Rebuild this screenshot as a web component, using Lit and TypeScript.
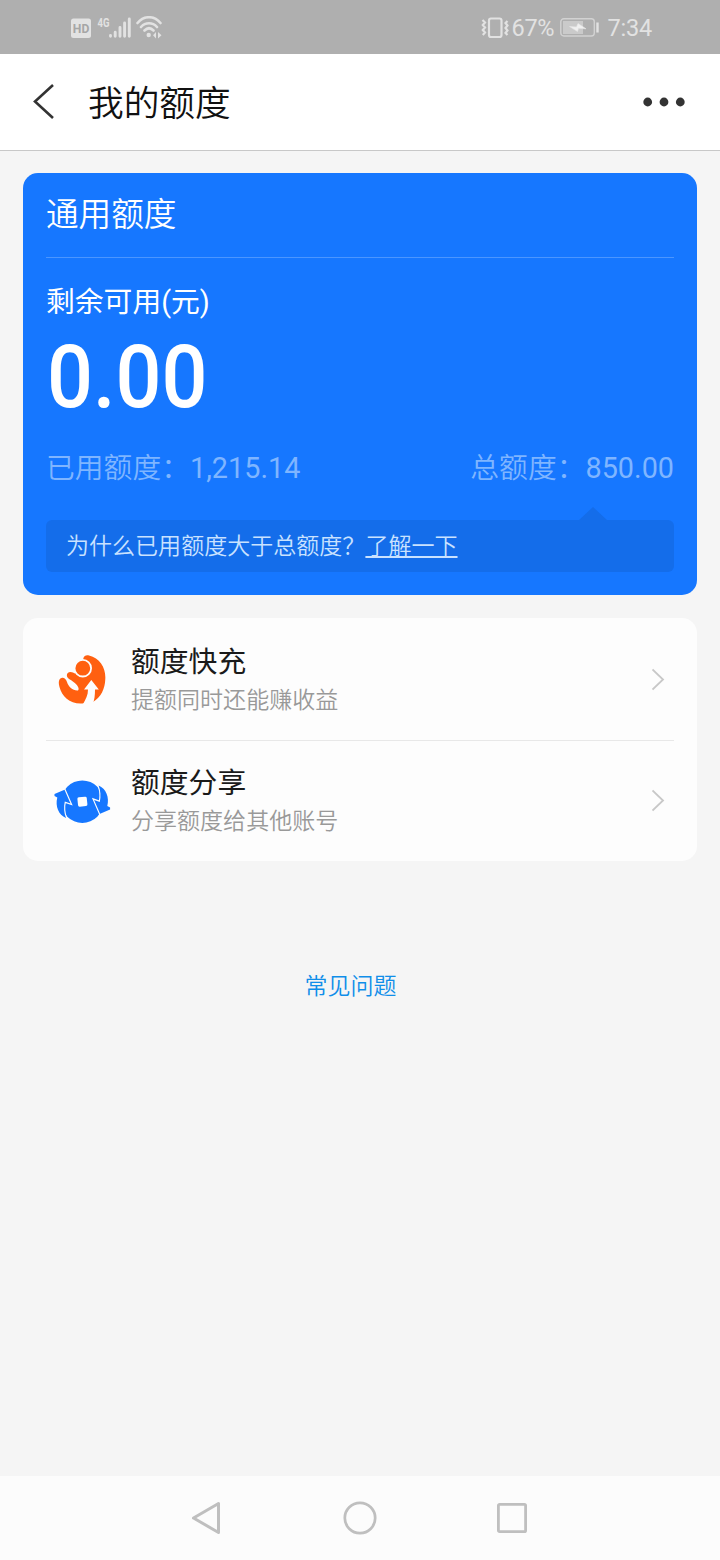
import { LitElement, html, css, svg } from "lit";
import { customElement, property } from "lit/decorators.js";

const boostIcon = svg`
  <path fill="#ff6010" d="M26.300 3.500C27 .500 29.500 -.300 32 .400C43 3 49 13 48.300 24C48 34 44 42 36 47L27 48.300C14 50 5 42 2.500 32C1 27 2 23.500 4.500 23C7 22.300 9 24 10 27C11.500 32 16 36 21 35.500C23 33 20 28.500 12 24C8.500 21.500 9.500 17 13.500 17C15.500 17 16.500 18 18 18.500L26.500 6Z"/>
  <circle cx="25.800" cy="13.200" r="8.300" fill="#ff6010" stroke="#fdfdfd" stroke-width="1.800"/>
  <path fill="#fdfdfd" d="M34.300 25L27 34.500H31C31 40 29 44 25.500 50H35.500C37.500 45 38 40 38 34.500H41.800Z"/>`;

const shareArrow = "M1.500 14L11.500 9.700L17.500 23.500L11.800 21.500C10.500 27 11 33 13 38C5.500 35 2 26 4.300 17.500L1.500 16Z";
const shareIcon = svg`
  <g fill="#1677ff" stroke="#fdfdfd" stroke-width="2.400" paint-order="stroke">
    <circle cx="29.300" cy="21.700" r="21.200" stroke="none"/>
    <path d=${shareArrow}/>
    <path d=${shareArrow} transform="rotate(180 29.300 21.700)"/>
  </g>
  <rect x="24.700" y="17" width="9.400" height="9.400" rx="1.600" fill="#fdfdfd" transform="rotate(-6 29.300 21.700)"/>`;

@customElement("status-bar")
class StatusBar extends LitElement {
  static styles = css`
    :host { display: flex; height: 54px; box-sizing: border-box; padding: 1px 68px 0 71px; align-items: center;
      justify-content: space-between; background: #afafaf; color: #e2e2e2; font: 23.500px/54px Roboto, sans-serif; }
    .side { display: flex; align-items: center; height: 53px; }
    svg { display: block; flex: none; }
    .pct { width: 42px; margin: 0 7px 0 2px; letter-spacing: -.3px; }
    .time { margin-left: 8px; letter-spacing: -.2px; }
    .tag { font: 700 12px Roboto, sans-serif; }
    .hd { font: 700 13px Roboto, sans-serif; }
  `;
  render() {
    return html`
      <div class="side">
        <svg width="94" height="24" viewBox="0 0 94 24">
          <rect x="0" y="2.500" width="20" height="19.500" rx="2.500" fill="#e2e2e2"/>
          <text class="hd" x="1.800" y="17" textLength="16.500" lengthAdjust="spacingAndGlyphs" fill="#a6a6a6">HD</text>
          <text class="tag" x="26.500" y="10.600" textLength="12" lengthAdjust="spacingAndGlyphs" fill="#e2e2e2">4G</text>
          <path d="M39.500 20.200V19.500M44.200 20.200V16.200M49 20.200V11.500M53.600 20.200V7M58.300 20.200V3" stroke="#e2e2e2" stroke-width="2.900" stroke-linecap="round"/>
          <g fill="none" stroke="#e2e2e2" stroke-width="2.600" stroke-linecap="round">
            <path d="M66.500 7C73-.700 83-.700 89.500 7M70 11C74.500 6 81.500 6 86 11M73.500 14.500C76.500 11.500 79.500 11.500 82.500 14.500"/>
          </g>
          <circle cx="77.700" cy="19" r="2.200" fill="#e2e2e2"/>
          <path d="M82 19.200L85 16V22.500ZM90.500 19.200L87 16V22.500Z" fill="#e2e2e2"/>
        </svg>
      </div>
      <div class="side">
        <svg width="28" height="22" viewBox="0 0 28 22" fill="none" stroke="#e2e2e2">
          <rect x="8" y="1.500" width="12.500" height="18.500" rx="2" stroke-width="2.200"/>
          <path stroke-width="2.200" d="M1.500 3L4 5.500L1.800 8L4 10.500L1.800 13L4 15.500L1.800 18M26.500 4L24.500 6L26.500 8.500L24.500 11L26.500 13.500L24.500 16L26.500 18"/>
        </svg>
        <span class="pct">67%</span>
        <svg width="39" height="19" viewBox="0 0 39 19">
          <rect x=".8" y=".8" width="33.500" height="17.200" rx="3" fill="none" stroke="#d2d2d2" stroke-width="1.400"/>
          <rect x="3" y="3" width="20" height="13" fill="#cacaca"/>
          <path d="M9.500 8.500L16.500 9L18 5.500L26 10.800L18.500 10.300L17.500 13.500Z" fill="#f0f0f0" stroke="#e6e6e6" stroke-width=".6"/>
          <path d="M37.500 4.500V14.500" stroke="#e2e2e2" stroke-width="2.400"/>
        </svg>
        <span class="time">7:34</span>
      </div>`;
  }
}

@customElement("quota-card")
class QuotaCard extends LitElement {
  static styles = css`
    :host { display: block; box-sizing: border-box; height: 422px; padding: 0 23px; border-radius: 15px; background: #1677ff;
      color: #fff; font-family: Roboto, "Noto Sans CJK SC", sans-serif; font-weight: 350; }
    .heading { height: 84px; line-height: 85px; font-size: 32.640px; border-bottom: 1px solid #4b96ff; }
    .label { margin-top: 23px; font-size: 28.800px; line-height: 42px; font-weight: 400; }
    .amount { height: 88px; margin-left: 1px; font: 500 88px/108px Roboto, sans-serif; transform: scaleX(.92); transform-origin: 0 0; }
    .totals { display: flex; justify-content: space-between; margin-top: 32px; font-size: 28.800px; line-height: 50px; color: #7fb5ff; }
    .totals span { white-space: nowrap; }
    .totals b { font-weight: 400; }
    .tip { position: relative; height: 52px; box-sizing: border-box; margin-top: 27px; padding-left: 20px; border-radius: 6px;
      background: #146dea; color: #c9e2ff; font-size: 23.040px; line-height: 54px; }
    .tip::before { content: ""; position: absolute; right: 67px; top: -13px; border: solid transparent; border-width: 0 14px 13px;
      border-bottom-color: #146dea; }
    .more { color: #c9e2ff; text-decoration: underline; text-underline-offset: 2px; text-decoration-thickness: 1.500px; }
  `;
  render() {
    return html`
      <div class="heading">通用额度</div>
      <div class="label">剩余可用(元)</div>
      <div class="amount">0.00</div>
      <div class="totals"><span>已用额度：<b>1,215.14</b></span><span>总额度：<b>850.00</b></span></div>
      <div class="tip">为什么已用额度大于总额度？<a class="more">了解一下</a></div>`;
  }
}

@customElement("quota-row")
class QuotaRow extends LitElement {
  @property() name = "";
  @property() detail = "";
  @property() kind = "boost";
  static styles = css`
    :host { display: flex; align-items: center; height: 121px; font-family: "Noto Sans CJK SC", sans-serif; }
    :host([kind="share"]) { height: 119px; }
    svg { display: block; flex: none; }
    .icon { width: 58px; margin: 1px 20px 0 7px; display: flex; justify-content: center; }
    .text { flex: 1; padding-bottom: 5px; }
    .name { font-size: 28.800px; line-height: 42px; color: #1a1a1a; }
    .detail { font-size: 23.040px; line-height: 35px; color: #999; font-weight: 350; }
    .arrow { margin-right: 9px; }
  `;
  render() {
    const boost = this.kind === "boost";
    return html`
      <div class="icon">${boost
        ? html`<svg width="50" height="50" viewBox="0 0 50 50">${boostIcon}</svg>`
        : html`<svg width="58" height="43" viewBox="0 0 58 43">${shareIcon}</svg>`}</div>
      <div class="text"><div class="name">${this.name}</div><div class="detail">${this.detail}</div></div>
      <svg class="arrow" width="13" height="24" viewBox="0 0 13 24"><path d="M.500 1.500L11 11.500L.500 21.500" fill="none" stroke="#c8c8c8" stroke-width="1.800"/></svg>`;
  }
}

@customElement("app-root")
class AppRoot extends LitElement {
  static styles = css`
    :host { display: flex; flex-direction: column; height: 1560px; background: #f5f5f5; font-family: "Noto Sans CJK SC", sans-serif; }
    svg { display: block; flex: none; }
    header { display: flex; align-items: center; height: 97px; box-sizing: border-box; padding: 0 34px 0 32px; background: #fff; border-bottom: 1px solid #c8c8c8; }
    h1 { flex: 1; margin: 0 0 0 33px; padding-bottom: 3px; font-size: 35.700px; font-weight: 350; line-height: 93px; color: #111; }
    main { flex: 1; padding: 22px 23px 0; }
    .list { height: 243px; box-sizing: border-box; margin-top: 23px; padding: 1px 23px 0; border-radius: 15px; background: #fdfdfd; }
    .rule { height: 1px; background: #e8e8e8; }
    .faq { margin: 105px 19px 0 0; text-align: center; font-size: 23.040px; line-height: 36px; color: #108ee9; font-weight: 350; }
    nav { height: 84px; box-sizing: border-box; padding-right: 3px; display: flex; align-items: center; justify-content: center; gap: 120.500px; background: #fcfcfc; }
  `;
  render() {
    return html`
      <status-bar></status-bar>
      <header>
        <svg width="23" height="36" viewBox="0 0 23 36"><path d="M21 1L3 17.500L21 34" fill="none" stroke="#333" stroke-width="2.600"/></svg>
        <h1>我的额度</h1>
        <svg width="44" height="10" viewBox="0 0 44 10" fill="#333"><circle cx="5.700" cy="5" r="4.400"/><circle cx="22" cy="5" r="4.400"/><circle cx="38.300" cy="5" r="4.400"/></svg>
      </header>
      <main>
        <quota-card></quota-card>
        <div class="list">
          <quota-row kind="boost" name="额度快充" detail="提额同时还能赚收益"></quota-row>
          <div class="rule"></div>
          <quota-row kind="share" name="额度分享" detail="分享额度给其他账号"></quota-row>
        </div>
        <div class="faq">常见问题</div>
      </main>
      <nav>
        <svg width="32" height="36" viewBox="0 0 32 36"><path d="M28.500 3.500V32.500L3.500 18Z" fill="none" stroke="#bfbfbf" stroke-width="3" stroke-linejoin="round"/></svg>
        <svg width="34" height="34" viewBox="0 0 34 34"><circle cx="17" cy="17" r="15.200" fill="none" stroke="#bfbfbf" stroke-width="2.700"/></svg>
        <svg width="30" height="30" viewBox="0 0 30 30"><rect x="1.400" y="1.400" width="27.200" height="27.200" rx="1.200" fill="none" stroke="#bfbfbf" stroke-width="2.800"/></svg>
      </nav>`;
  }
}
